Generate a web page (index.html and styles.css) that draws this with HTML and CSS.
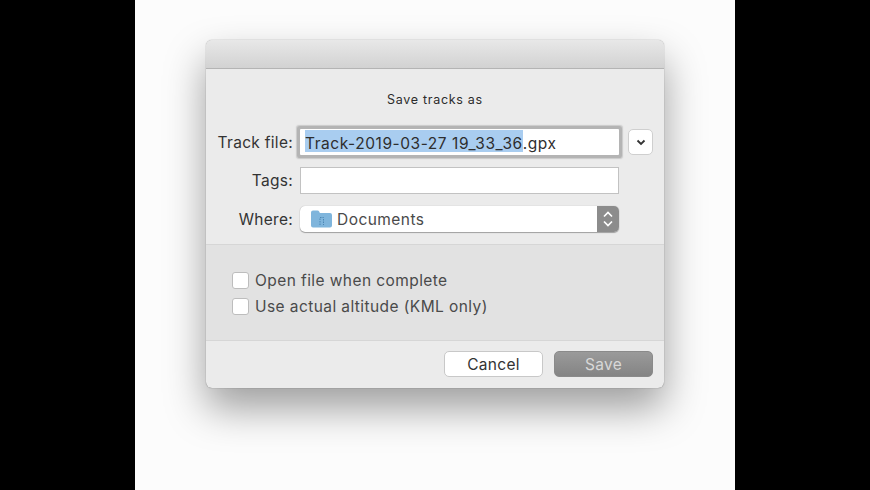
FILE: index.html
```html
<!DOCTYPE html>
<html lang="en">
<head>
    <meta charset="UTF-8">
    <title>Save tracks as</title>
    <link rel="stylesheet" href="styles.css">
</head>
<body>
    <div class="page">
        <div class="dialog">
            <div class="titlebar"></div>

            <div class="top">
                <h1>Save tracks as</h1>

                <div class="form-row first-row">
                    <label>Track file:</label>
                    <div class="input focused"><span class="selection">Track-2019-03-27 19_33_36</span>.gpx</div>
                    <button class="expand">
                        <svg width="10" height="7" viewBox="0 0 10 7"><path d="M1.5 1.5 5 5l3.5-3.5" fill="none" stroke="#333" stroke-width="1.8"/></svg>
                    </button>
                </div>

                <div class="form-row tags-row">
                    <label>Tags:</label>
                    <div class="input"></div>
                </div>

                <div class="form-row where-row">
                    <label>Where:</label>
                    <div class="select">
                        <svg class="folder" width="21" height="18" viewBox="0 0 21 18">
                            <path d="M0 2.5Q0 .5 2 .5h4.500q1.200 0 1.800 1.200l.6 1.300H19q2 0 2 2v10.500q0 2-2 2H2q-2 0-2-2z" fill="#7fb5dc"/>
                            <path d="M9 15V7.500h3.500V15" fill="none" stroke="#4c86b4" stroke-width="1" stroke-dasharray="1.500 1"/>
                        </svg>
                        <span class="select-text">Documents</span>
                        <span class="stepper">
                            <svg width="12" height="18" viewBox="0 0 12 18"><path d="M2 6.500 6 2.500l4 4M2 11.500l4 4 4-4" fill="none" stroke="#fff" stroke-width="1.700"/></svg>
                        </span>
                    </div>
                </div>
            </div>

            <div class="options">
                <div class="check-row"><span class="checkbox"></span>Open file when complete</div>
                <div class="check-row"><span class="checkbox"></span>Use actual altitude (KML only)</div>
            </div>

            <div class="footer">
                <button class="btn">Cancel</button>
                <button class="btn btn-save">Save</button>
            </div>
        </div>
    </div>
</body>
</html>
```

FILE: styles.css
```css
* {
    margin: 0;
    padding: 0;
    box-sizing: border-box;
}

body {
    font-family: Inter, Roboto, sans-serif;
    background-color: #000;
    width: 870px;
    height: 490px;
    overflow: hidden;
    color: #333;
}

.page {
    width: 600px;
    height: 490px;
    margin-left: 135px;
    padding: 40px 0 0 71px;
    background-color: #fcfcfc;
}

.dialog {
    width: 458px;
    height: 348px;
    background-color: #ebebeb;
    border-radius: 6px;
    display: flex;
    flex-direction: column;
    box-shadow: 0 0 1px rgba(0, 0, 0, 0.55), 0 20px 40px rgba(0, 0, 0, 0.38);
}

.titlebar {
    height: 29px;
    flex: none;
    border-radius: 6px 6px 0 0;
    background: linear-gradient(#e8e8e8, #d2d2d2);
    border-bottom: 1px solid #b4b4b4;
}

.top {
    height: 176px;
    flex: none;
    border-bottom: 1px solid #d6d6d6;
    padding-top: 23px;
}

h1 {
    font-size: 12.5px;
    font-weight: 400;
    line-height: 15px;
    letter-spacing: 0.7px;
    text-align: center;
    color: #2c2c2c;
}

.form-row {
    display: flex;
    align-items: center;
}

.first-row {
    margin-top: 22px;
}

.tags-row {
    margin-top: 12px;
}

.where-row {
    margin-top: 12px;
}

label {
    width: 87px;
    text-align: right;
    font-size: 15.5px;
    letter-spacing: 0.3px;
    color: #333;
}

.input {
    width: 319px;
    height: 27px;
    margin-left: 7px;
    background-color: #fff;
    border: 1px solid #c2c2c2;
    font-size: 15.5px;
    letter-spacing: 0.55px;
    line-height: 28px;
    padding-left: 5px;
    color: #2e2e2e;
    white-space: nowrap;
}

.input.focused {
    height: 26px;
    border: none;
    border-radius: 1px;
    padding-top: 1px;
    box-shadow: 0 0 0 3px #b4b4b4, 0 0 1px 4px rgba(170, 170, 170, 0.5);
}

.selection {
    background-color: #a9cdf0;
    display: inline-block;
    height: 22px;
    line-height: 28px;
}

.expand {
    width: 25px;
    height: 26px;
    margin-left: 9px;
    background-color: #fff;
    border: 1px solid #cfcfcf;
    border-radius: 5px;
    display: flex;
    align-items: center;
    justify-content: center;
}

.select {
    width: 319px;
    height: 26px;
    margin-left: 7px;
    background-color: #fff;
    border-radius: 5px;
    box-shadow: 0 1px 1px rgba(0, 0, 0, 0.3), 0 0 1px rgba(0, 0, 0, 0.3);
    display: flex;
    align-items: center;
    padding-left: 11px;
    overflow: hidden;
}

.select-text {
    font-size: 15.5px;
    letter-spacing: 0.45px;
    margin-left: 5px;
    flex: 1;
    color: #4a4a4a;
}

.stepper {
    width: 22px;
    height: 26px;
    background-color: #8c8c8c;
    display: flex;
    align-items: center;
    justify-content: center;
}

.options {
    height: 96px;
    flex: none;
    background-color: #e2e2e2;
    border-bottom: 1px solid #d6d6d6;
    padding: 22px 0 0 26px;
}

.check-row {
    display: flex;
    align-items: center;
    height: 26px;
    font-size: 15.5px;
    letter-spacing: 0.42px;
    color: #4a4a4a;
}

.checkbox {
    width: 17px;
    height: 17px;
    margin-right: 6px;
    background-color: #fff;
    border: 1px solid #bdbdbd;
    border-radius: 3px;
}

.footer {
    flex: 1;
    display: flex;
    justify-content: flex-end;
    gap: 11px;
    padding: 10px 11px 0 0;
}

.btn {
    width: 99px;
    height: 26px;
    font-family: inherit;
    font-size: 15.5px;
    letter-spacing: 0.3px;
    color: #333;
    background-color: #fff;
    border: 1px solid #c8c8c8;
    border-radius: 5px;
}

.btn-save {
    color: #d8d8d8;
    background: linear-gradient(#9a9a9a, #848484);
    border-color: #8a8a8a;
}
```
